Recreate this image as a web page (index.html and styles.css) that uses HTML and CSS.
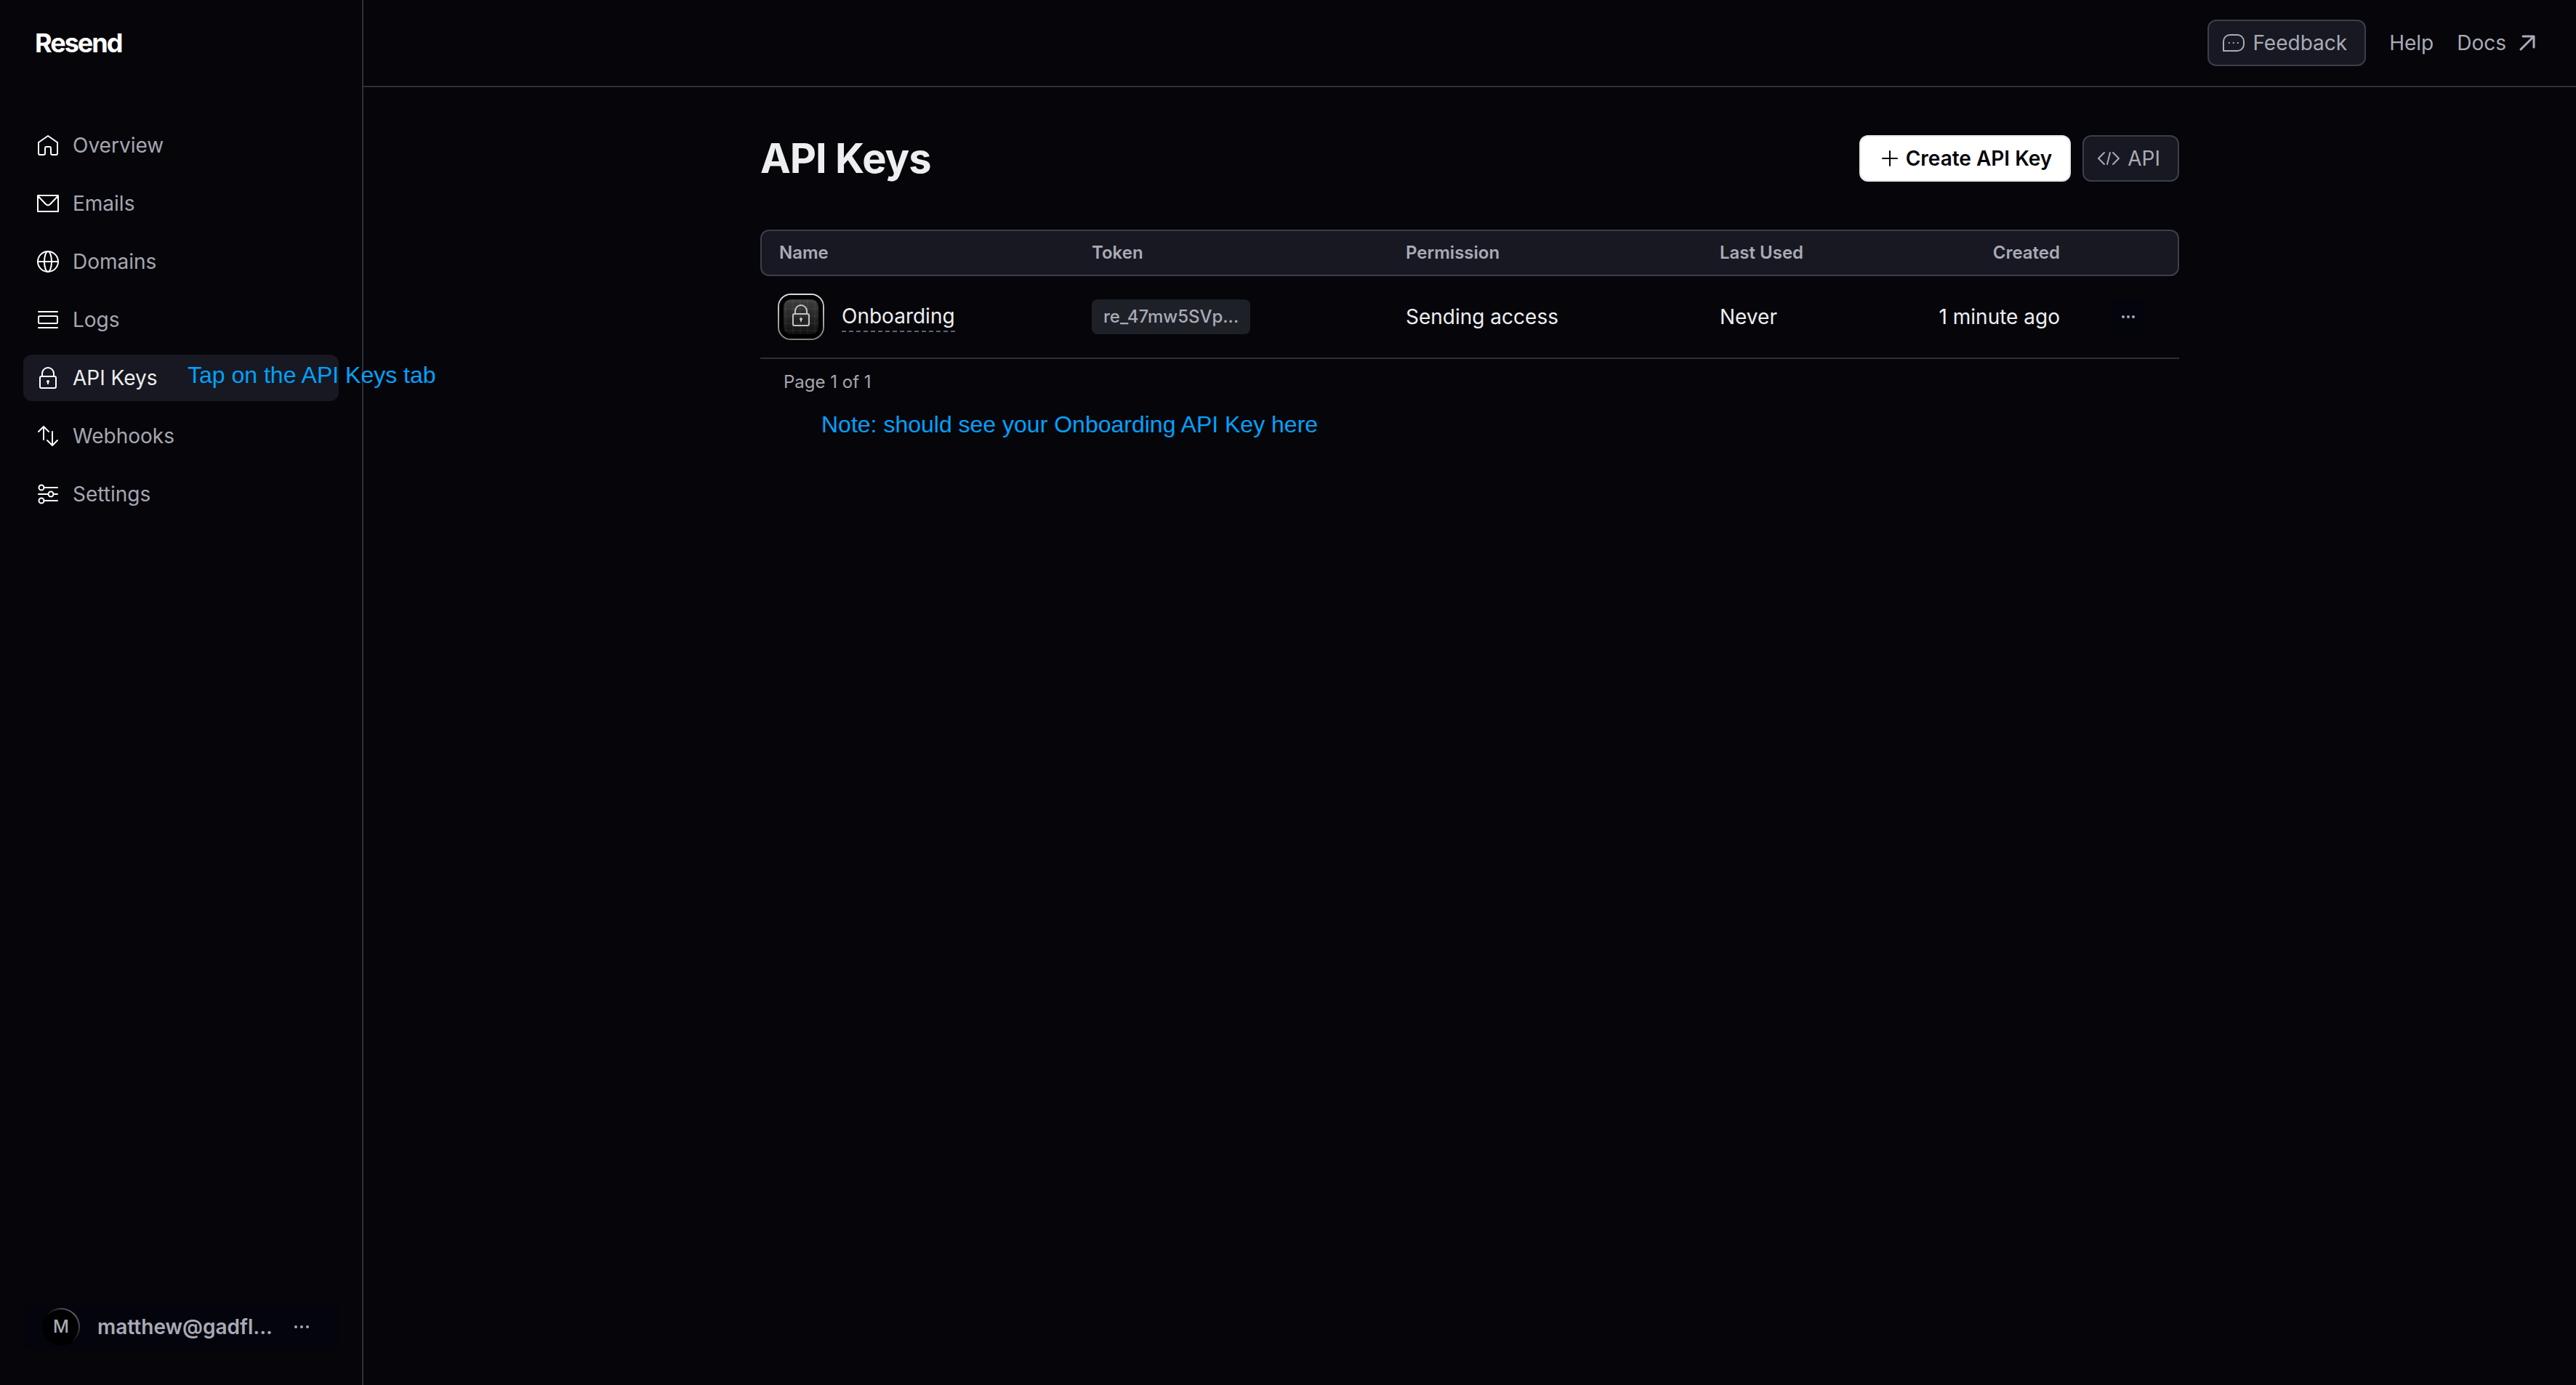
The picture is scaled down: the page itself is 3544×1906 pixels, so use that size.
FILE: index.html
```html
<!DOCTYPE html>
<html lang="en">
<head>
<meta charset="utf-8">
<title>API Keys · Resend</title>
<link rel="stylesheet" href="styles.css">
</head>
<body>
<div class="app">
  <aside class="sidebar">
    <a class="logo" href="#">Resend</a>
    <nav class="nav">
      <a class="nav-item" href="#"><svg class="icon" viewBox="0 0 32 32"><path d="M3 12 16 3l13 9v15a2 2 0 0 1-2 2h-5a2 2 0 0 1-2-2v-7a2 2 0 0 0-2-2h-4a2 2 0 0 0-2 2v7a2 2 0 0 1-2 2H5a2 2 0 0 1-2-2z"/></svg>Overview</a>
      <a class="nav-item" href="#"><svg class="icon" viewBox="0 0 32 32"><path d="M2 5h28v22H2zM2.500 6l10.500 11q3 3 6 0l10.500-11"/></svg>Emails</a>
      <a class="nav-item" href="#"><svg class="icon" viewBox="0 0 32 32"><circle cx="16" cy="16" r="14"/><ellipse cx="16" cy="16" rx="5" ry="14"/><path d="M2 16h28"/></svg>Domains</a>
      <a class="nav-item" href="#"><svg class="icon" viewBox="0 0 32 32"><path d="M3 5h26M3 27h26"/><rect x="3" y="11" width="26" height="10" rx="1.500"/></svg>Logs</a>
      <a class="nav-item active" href="#" aria-current="page"><svg class="icon" viewBox="0 0 32 32"><rect x="5" y="14" width="22" height="16" rx="2"/><path d="M8 14v-4a8 8 0 0 1 16 0v4M16 21v3"/><circle class="solid" cx="16" cy="21" r="1.500"/></svg>API Keys<span class="hint hint-nav">Tap on the API Keys tab</span></a>
      <a class="nav-item" href="#"><svg class="icon" viewBox="0 0 32 32"><path d="M10 21V3M3 10l7-7 7 7M22 10v19M15 22l7 7 7-7"/></svg>Webhooks</a>
      <a class="nav-item" href="#"><svg class="icon" viewBox="0 0 32 32"><circle cx="7" cy="7" r="3.500"/><circle cx="20" cy="16" r="3.500"/><circle cx="7" cy="25" r="3.500"/><path d="M10.500 7H29M3 16h13.500M23.500 16H29M10.500 25H29"/></svg>Settings</a>
    </nav>
    <button class="account" type="button">
      <span class="avatar"><span class="initial">M</span></span>
      <span class="email">matthew@gadfl...</span>
      <svg class="dots" viewBox="0 0 24 24"><circle cx="4" cy="12" r="2"/><circle cx="12" cy="12" r="2"/><circle cx="20" cy="12" r="2"/></svg>
    </button>
  </aside>
  <div class="content">
    <header class="topbar">
      <button class="btn" type="button"><svg class="icon" viewBox="0 0 32 32"><path d="M2 27V14a9 9 0 0 1 9-9h10a9 9 0 0 1 9 9v4a9 9 0 0 1-9 9z"/><path class="solid" d="M9.500 15.500h1v1h-1zM15.500 15.500h1v1h-1zM21.500 15.500h1v1h-1z"/></svg>Feedback</button>
      <a class="top-link" href="#">Help</a>
      <a class="top-link" href="#">Docs<svg class="arrow" viewBox="0 0 22 22"><path d="M5 2h15v15M20 2 2 20"/></svg></a>
    </header>
    <main class="page">
      <div class="page-head">
        <h1>API Keys</h1>
        <div class="actions">
          <button class="btn primary" type="button"><svg class="icon" viewBox="0 0 32 32"><path d="M16 6v20M6 16h20"/></svg>Create API Key</button>
          <button class="btn" type="button"><svg class="icon" viewBox="0 0 32 32"><path d="M10 8 2 16l8 8M22 8l8 8-8 8M18 8l-4 16"/></svg>API</button>
        </div>
      </div>
      <table class="keys">
        <thead>
          <tr><th class="wide">Name</th><th class="wide">Token</th><th class="wide">Permission</th><th>Last Used</th><th class="end">Created</th><th class="menu" aria-label="Actions"></th></tr>
        </thead>
        <tbody>
          <tr>
            <td><div class="name"><span class="tile"><svg class="icon" viewBox="0 0 32 32"><rect x="5" y="14" width="22" height="16" rx="2"/><path d="M8 14v-4a8 8 0 0 1 16 0v4M16 21v3"/><circle class="solid" cx="16" cy="21" r="1.500"/></svg></span><a class="key-link" href="#">Onboarding</a></div></td>
            <td><code class="token">re_47mw5SVp...</code></td>
            <td>Sending access</td>
            <td>Never</td>
            <td class="end">1 minute ago</td>
            <td class="menu"><button class="more" type="button" aria-label="More actions"><svg class="dots" viewBox="0 0 24 24"><circle cx="5" cy="12" r="2"/><circle cx="12" cy="12" r="2"/><circle cx="19" cy="12" r="2"/></svg></button></td>
          </tr>
        </tbody>
      </table>
      <p class="pager">Page 1 of 1</p>
      <p class="hint hint-note">Note: should see your Onboarding API Key here</p>
    </main>
  </div>
</div>
</body>
</html>
```
FILE: styles.css
```css
* { box-sizing: border-box; }
body {
  margin: 0;
  background: #05050a;
  color: #edeef0;
  font: 400 28px/40px Inter, "Liberation Sans", sans-serif;
}
a { color: inherit; text-decoration: none; }
button { font: inherit; color: inherit; cursor: pointer; }
svg { display: block; flex: none; }
.app { display: flex; min-height: 100vh; }

.icon, .arrow { width: 32px; height: 32px; fill: none; stroke: currentColor; stroke-width: 2; stroke-linejoin: round; stroke-linecap: round; }
.icon .solid { fill: currentColor; stroke-width: 1; }
.dots { width: 24px; height: 24px; fill: currentColor; }

.sidebar {
  display: flex; flex-direction: column; flex: none;
  width: 500px; padding: 32px 32px 48px;
  border-right: 2px solid #2e3038;
}
.logo { padding: 0 16px; color: #fff; font-weight: 700; font-size: 36px; line-height: 54px; letter-spacing: -2px; }
.nav { display: flex; flex-direction: column; gap: 16px; margin-top: 82px; }
.nav-item {
  position: relative;
  display: flex; align-items: center; gap: 18px;
  height: 64px; padding: 0 18px; border-radius: 12px;
  color: #a5a7b0;
}
.nav-item .icon { color: #fff; }
.nav-item.active { background: #171821; color: #edeef0; }
.hint { color: #00a2ff; font: 400 32px/40px "Liberation Sans", Arial, sans-serif; white-space: nowrap; }
.hint-nav { position: absolute; left: 226px; top: 8px; }
.account {
  display: flex; align-items: center;
  height: 64px; margin-top: auto; padding: 0 26px;
  border: 0; border-radius: 12px; background: #04040d; color: #a9abb6;
  font-weight: 600;
}
.avatar { width: 52px; height: 52px; padding: 2px; border-radius: 50%; background: linear-gradient(225deg, #808086, #000 55%); }
.initial { display: block; border-radius: 50%; background: #000; font-size: 24px; font-weight: 500; line-height: 48px; }
.email { margin: 0 28px 0 24px; }

.content { flex: 1; min-width: 0; }
.topbar {
  display: flex; align-items: center; justify-content: flex-end; gap: 32px;
  height: 120px; padding: 0 56px;
  border-bottom: 2px solid #2e3038;
}
.btn {
  display: flex; align-items: center; gap: 10px;
  height: 64px; padding: 0 24px 0 18px;
  border: 2px solid #3b3f4b; border-radius: 12px; background: #171821; color: #a9abb6;
}
.btn.primary { gap: 6px; padding: 0 24px; border-color: #e8e9ed; background: #fff; color: #05050a; font-weight: 600; }
.top-link { display: flex; align-items: center; gap: 18px; color: #a9abb6; }
.arrow { width: 22px; height: 22px; stroke-width: 3; }

.page { max-width: 2048px; margin: 0 auto; padding: 64px 48px; }
.page-head { display: flex; align-items: center; justify-content: space-between; margin-bottom: 64px; }
h1 { margin: 0; font-weight: 700; font-size: 56px; line-height: 68px; letter-spacing: -1px; }
.actions { display: flex; gap: 16px; }
.keys { width: 100%; table-layout: fixed; border-collapse: separate; border-spacing: 0; }
.keys th { height: 64px; padding: 0 24px; border: 2px solid #3b3f4b; border-width: 2px 0; background: #171821; color: #a9abb6; font-weight: 600; font-size: 24px; line-height: 32px; text-align: left; }
.keys th:first-child { border-left-width: 2px; border-radius: 12px 0 0 12px; }
.keys th:last-child { border-right-width: 2px; border-radius: 0 12px 12px 0; }
.keys td { height: 114px; padding: 0 24px; border-bottom: 2px solid #2e3038; }
.keys .wide { width: 432px; }
.keys .end { text-align: right; }
.keys .menu { width: 140px; padding: 0; }
.name { display: flex; align-items: center; gap: 24px; }
.tile {
  display: grid; justify-items: center;
  width: 64px; height: 64px; padding-top: 12px;
  border: 2px solid transparent; border-radius: 18px;
  color: #c4c4c4;
  background:
    repeating-linear-gradient(90deg, transparent 0 8px, #ffffff0a 8px 10px) padding-box,
    repeating-linear-gradient(transparent 0 8px, #ffffff0a 8px 10px) padding-box,
    linear-gradient(#444, #0a0a0a) padding-box,
    linear-gradient(#dcdcdc, #7c7c7c) border-box;
  box-shadow: inset 0 0 0 6px #000;
}
/* The inset shadow starts inside the border, so the rim stays visible. */
.key-link { border-bottom: 2px dashed #5f6472; }
.token { display: inline-block; padding: 4px 16px; border-radius: 8px; background: #1e2028; color: #a9abb6; font: 500 24px/40px Inter, sans-serif; }
.more { display: block; margin: 0 auto; padding: 12px; border: 0; border-radius: 8px; background: #04040d; color: #a9abb6; }
.pager { margin: 16px 32px 0; color: #a5a7b0; font-size: 24px; line-height: 32px; }
.hint-note { margin: 22px 84px 0; }
```
